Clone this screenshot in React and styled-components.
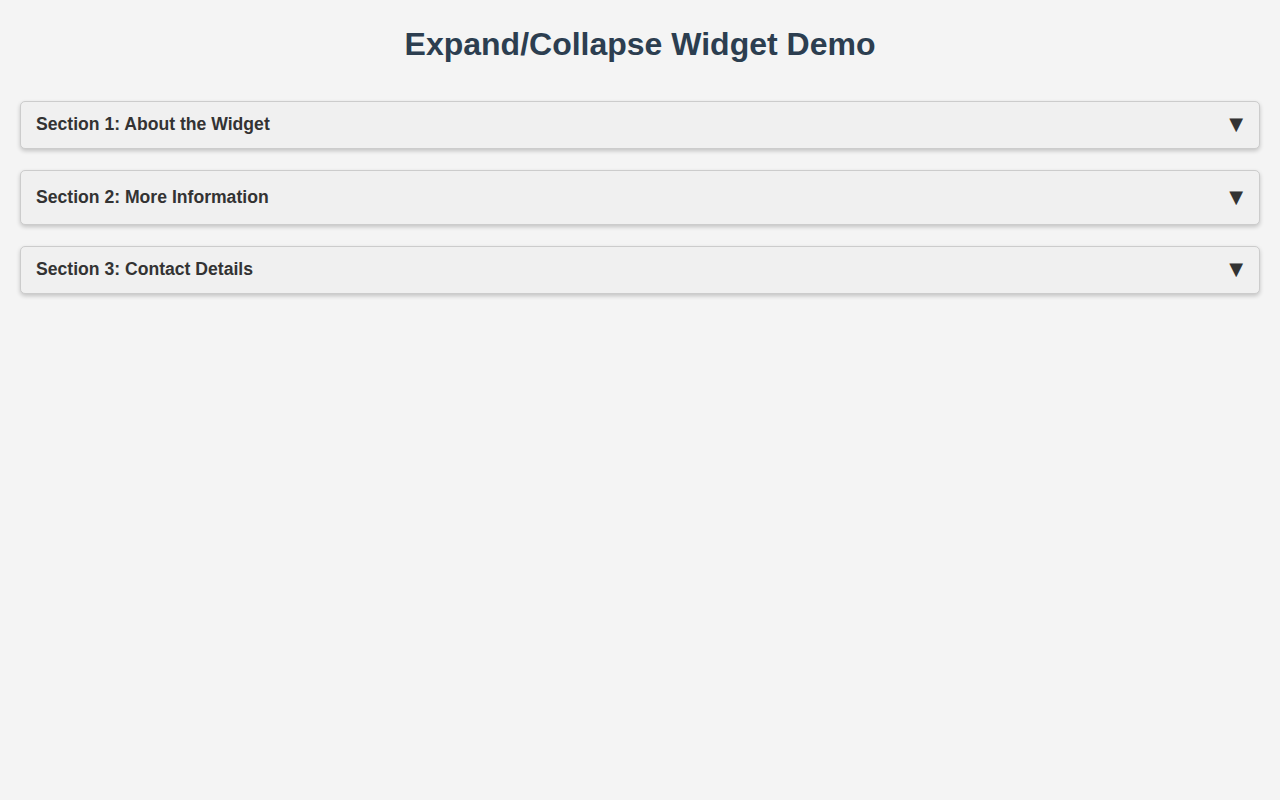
import React, { useState } from "react";
import styled, { createGlobalStyle } from "styled-components";

const GlobalStyle = createGlobalStyle`
  body {
    margin: 0;
    background-color: #f4f4f4;
    font-family: "Liberation Sans", Arial, sans-serif;
    color: #333;
  }
`;

const Page = styled.div`
  padding: 26px 20px 20px;
`;

const Title = styled.h1`
  margin: 0 0 38px;
  text-align: center;
  font-size: 32px;
  font-weight: bold;
  color: #2c3e50;
`;

const List = styled.div`
  display: flex;
  flex-direction: column;
  gap: 21px;
`;

const Section = styled.div`
  border: 1px solid #ccc;
  border-radius: 5px;
  background-color: #f0f0f0;
  box-shadow: 0 2px 4px rgba(0, 0, 0, 0.2);
  overflow: hidden;
`;

const Header = styled.button`
  display: flex;
  align-items: center;
  justify-content: space-between;
  width: 100%;
  padding: ${(p) => (p.$tall ? "15.5px 15px 17.5px" : "12px 15px 14px")};
  border: none;
  background: transparent;
  font-family: "Liberation Sans", Arial, sans-serif;
  font-size: 17.6px;
  line-height: 20px;
  font-weight: bold;
  color: #333;
  text-align: left;
  cursor: pointer;
`;

const Arrow = styled.span`
  margin-right: 1px;
  font-family: "DejaVu Sans", sans-serif;
  font-size: 18px;
  line-height: 20px;
  color: #333;
  transform: ${(p) => (p.$open ? "rotate(180deg)" : "none")};
`;

const Content = styled.div`
  padding: 15px;
  background: #fff;
  border-top: 1px solid #ccc;
  font-size: 15px;
  line-height: 1.5;
`;

const sections = [
  { title: "Section 1: About the Widget", body: "This widget lets you show and hide blocks of content." },
  { title: "Section 2: More Information", body: "Click a header to toggle its section.", tall: true },
  { title: "Section 3: Contact Details", body: "Reach us at contact@example.com." },
];

export default function App() {
  const [open, setOpen] = useState(null);
  return (
    <>
      <GlobalStyle />
      <Page>
        <Title>Expand/Collapse Widget Demo</Title>
        <List>
          {sections.map((s, i) => (
            <Section key={s.title}>
              <Header $tall={s.tall} onClick={() => setOpen(open === i ? null : i)}>
                {s.title}
                <Arrow $open={open === i}>▼</Arrow>
              </Header>
              {open === i && <Content>{s.body}</Content>}
            </Section>
          ))}
        </List>
      </Page>
    </>
  );
}
